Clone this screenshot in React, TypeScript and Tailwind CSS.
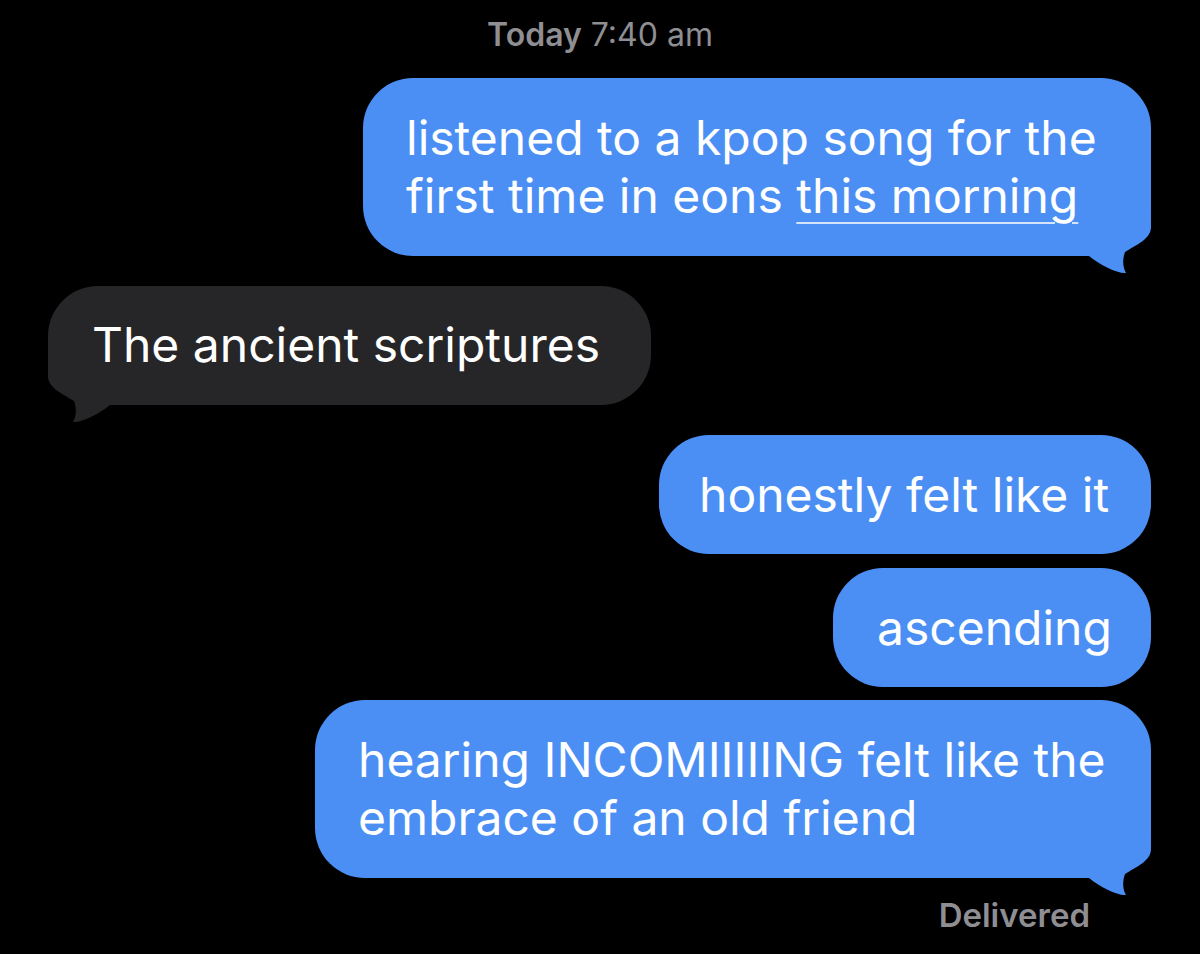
import React from "react";

const BLUE = "#4b8ff5";

function Tail({ color, left }: { color: string; left?: boolean }) {
  return (
    <svg
      width="91"
      height="73"
      viewBox="0 -12 91 73"
      className={
        left
          ? "absolute left-0 bottom-[-19px] -scale-x-100"
          : "absolute right-0 bottom-[-19px]"
      }
      aria-hidden
    >
      <path
        d="M91 -12 L91 13 C91 25 76 31 65 38 C62 46 63 54 66 59 C58 60 40 51 29 42 L0 42 L0 -12 Z"
        fill={color}
      />
    </svg>
  );
}

function Sent({
  children,
  tail,
  className = "",
  width,
}: {
  children: React.ReactNode;
  tail?: boolean;
  className?: string;
  width: string;
}) {
  return (
    <div className={"flex justify-end pr-[49px] " + className}>
      <div className={"relative " + width}>
        <div className="relative z-10 rounded-[50px] bg-[#4b8ff5] pl-[43px] pr-[20px] pt-[31px] pb-[30px] text-[48px] leading-[58px] text-white whitespace-nowrap">
          {children}
        </div>
        {tail && <Tail color={BLUE} />}
      </div>
    </div>
  );
}

export default function App() {
  return (
    <div
      className="w-[1200px] h-[954px] bg-black overflow-hidden flex flex-col"
      style={{ fontFamily: "Inter, 'Noto Sans', sans-serif" }}
    >
      <div className="pt-[16px] text-center text-[32px] leading-[38px] text-[#8e8e93]">
        <span className="font-semibold">Today</span> 7:40 am
      </div>

      <Sent tail width="w-[788px]" className="mt-[24px]">
        <div className="pb-px">
          listened to a kpop song for the
          <br />
          first time in eons{" "}
          <span className="underline decoration-[#d6e4fb] decoration-2 underline-offset-[9px]">
            this morning
          </span>
        </div>
      </Sent>

      <div className="flex justify-start pl-[48px] mt-[30px]">
        <div className="relative w-[603px]">
          <div className="relative z-10 rounded-[50px] bg-[#262628] pl-[44px] pt-[30px] pb-[31px] text-[48px] leading-[58px] text-white whitespace-nowrap">
            The ancient scriptures
          </div>
          <Tail color="#262628" left />
        </div>
      </div>

      <Sent width="w-[492px]" className="mt-[30px]">
        <span className="-ml-[3px]">honestly felt like it</span>
      </Sent>
      <Sent width="w-[318px]" className="mt-[14px]">
        <span className="ml-px">ascending</span>
      </Sent>
      <Sent tail width="w-[836px]" className="mt-[13px]">
        <div className="pb-px">
          hearing INCOMIIIIING felt like the
          <br />
          embrace of an old friend
        </div>
      </Sent>

      <div className="mt-[18px] flex justify-end pr-[110px] text-[33px] leading-[38px] font-semibold text-[#8e8e93]">
        Delivered
      </div>
    </div>
  );
}
